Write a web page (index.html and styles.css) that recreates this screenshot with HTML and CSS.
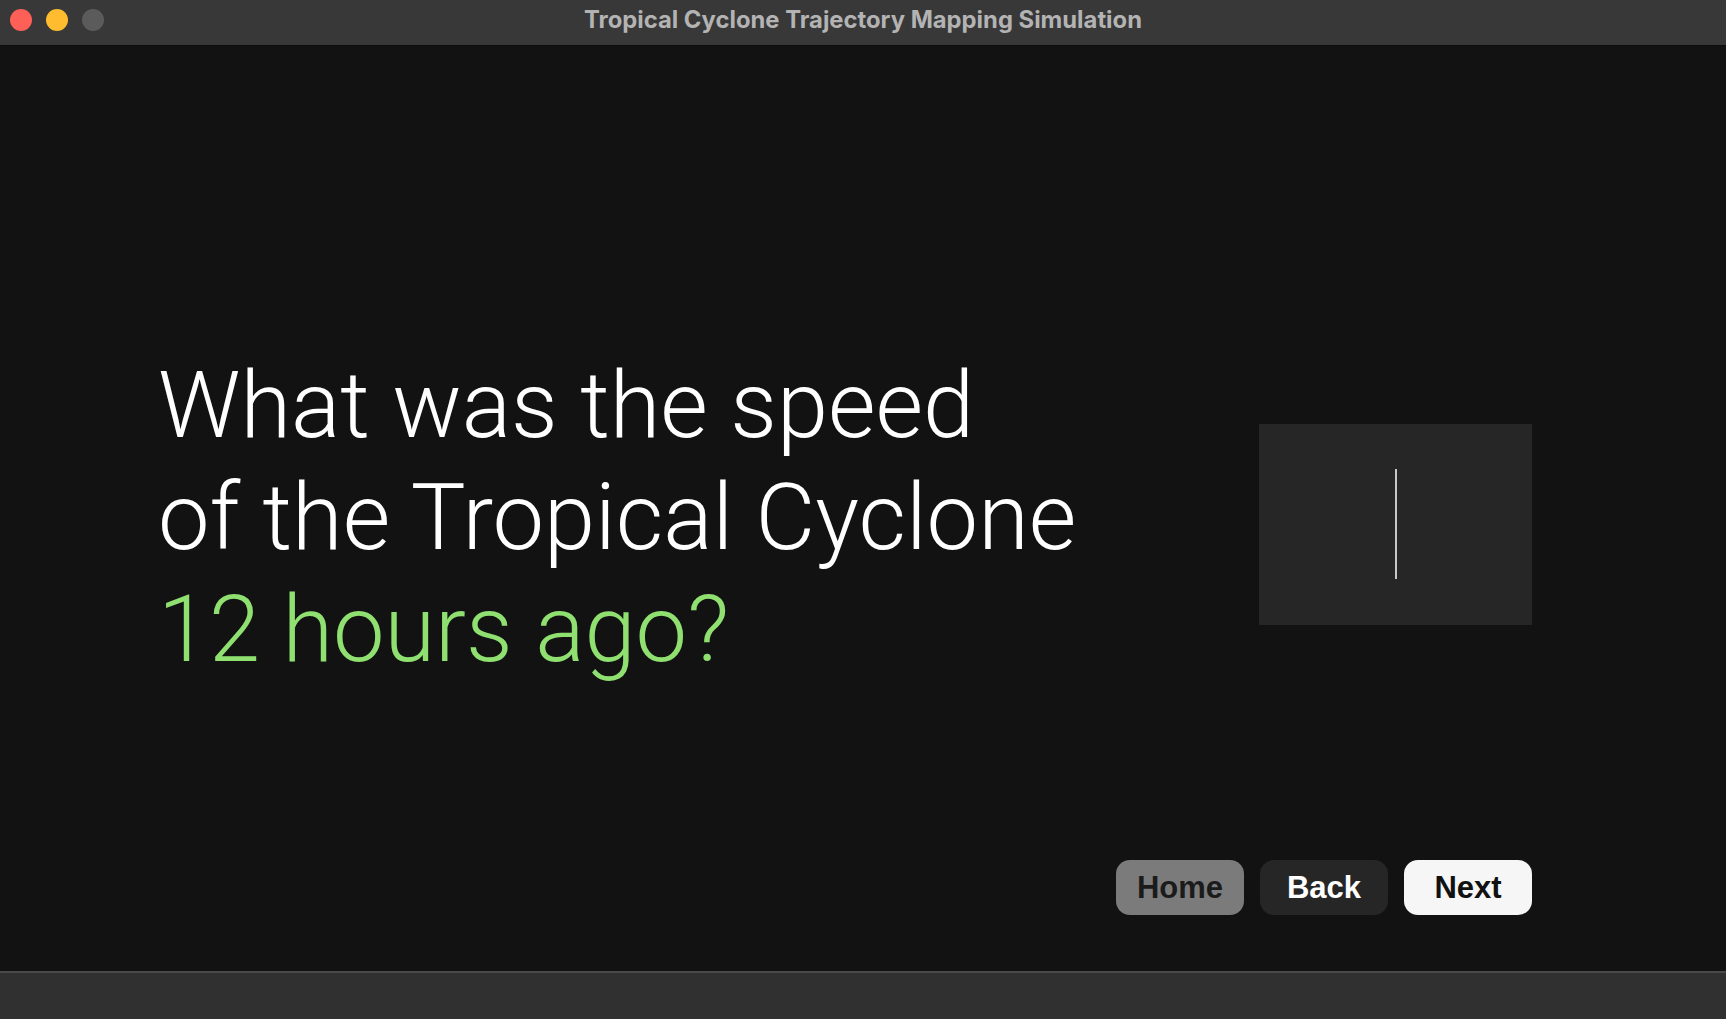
FILE: index.html
```html
<!DOCTYPE html>
<html lang="en">
<head>
<meta charset="utf-8">
<title>Tropical Cyclone Trajectory Mapping Simulation</title>
<link rel="stylesheet" href="styles.css">
</head>
<body>
<div class="window">
  <header class="titlebar">
    <div class="lights">
      <span class="light red"></span>
      <span class="light yellow"></span>
      <span class="light gray"></span>
    </div>
    <div class="title">Tropical Cyclone Trajectory Mapping Simulation</div>
  </header>
  <main class="main">
    <section class="question-row">
      <h1 class="question">
        <span class="line">What was the speed</span>
        <span class="line">of the Tropical Cyclone</span>
        <span class="line accent">12 hours ago?</span>
      </h1>
      <div class="answer-box"><span class="caret"></span></div>
    </section>
    <nav class="nav">
      <button class="btn btn-home">Home</button>
      <button class="btn btn-back">Back</button>
      <button class="btn btn-next">Next</button>
    </nav>
  </main>
  <footer class="statusbar"></footer>
</div>
</body>
</html>
```

FILE: styles.css
```css
* { box-sizing: border-box; }
html, body { margin: 0; padding: 0; }
body {
  width: 1726px;
  height: 1019px;
  overflow: hidden;
  background: #121212;
  font-family: "Liberation Sans", Arial, sans-serif;
}
.window {
  display: flex;
  flex-direction: column;
  height: 1019px;
}
.titlebar {
  height: 46px;
  flex: 0 0 46px;
  background: #383838;
  border-bottom: 1px solid #0c0c0c;
  position: relative;
  display: flex;
  align-items: center;
  justify-content: center;
  padding-bottom: 7px;
}
.lights {
  position: absolute;
  left: 10px;
  top: 9px;
  display: flex;
  gap: 14px;
}
.light {
  width: 22px;
  height: 22px;
  border-radius: 50%;
  display: block;
}
.red { background: #fe5f57; }
.yellow { background: #febc2e; }
.gray { background: #5b5b5b; }
.title {
  font-family: Inter, "Roboto", sans-serif;
  font-weight: 700;
  font-size: 23.8px;
  color: #b3b3b3;
}
.main {
  flex: 1;
  display: flex;
  flex-direction: column;
  padding: 142px 194px 56px 158px;
}
.question-row {
  flex: 1;
  display: flex;
  align-items: center;
  justify-content: space-between;
}
.question {
  margin: 0 0 13px 0;
  font-family: Roboto, "Liberation Sans", sans-serif;
  font-weight: 300;
  font-size: 92px;
  line-height: 112px;
  color: #ffffff;
}
.line { display: block; }
.accent { color: #8fe070; }
.answer-box {
  width: 273px;
  height: 201px;
  background: #262626;
  display: flex;
  align-items: center;
  justify-content: center;
}
.caret {
  display: block;
  width: 2px;
  height: 110px;
  background: #c8c8c8;
}
.nav {
  display: flex;
  justify-content: flex-end;
  gap: 16px;
}
.btn {
  width: 128px;
  height: 55px;
  border: none;
  border-radius: 14px;
  font-family: "Liberation Sans", Arial, sans-serif;
  font-weight: 700;
  font-size: 31px;
  padding: 0;
}
.btn-home { background: #7b7b7b; color: #1b1b1b; }
.btn-back { background: #262626; color: #ffffff; }
.btn-next { background: #f6f6f6; color: #111111; }
.statusbar {
  flex: 0 0 48px;
  height: 48px;
  background: #303030;
  border-top: 2px solid #4a4a4a;
}
```
